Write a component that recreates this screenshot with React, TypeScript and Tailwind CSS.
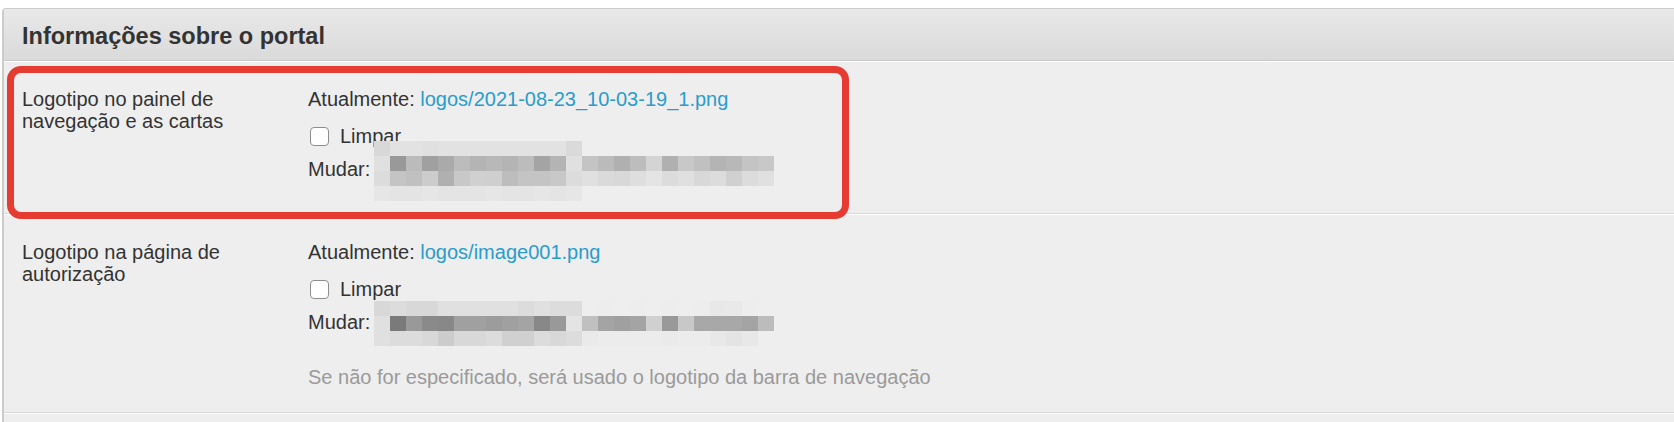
import React from "react";

const M1: string[][] = [
  ["d8", "e2", "e2", "e0", "e2", "e2", "e2", "e2", "e2", "e2", "e2", "e2", "da"],
  ["e0", "99", "bb", "a0", "aa", "bc", "b4", "b8", "b4", "bc", "a4", "b4", "e0", "c4", "bb", "b0", "bd", "d4", "b0", "c8", "c0", "b4", "b8", "c4", "c8"],
  ["dc", "c4", "c0", "cc", "b0", "c8", "d0", "cf", "bd", "c4", "c4", "c8", "dc", "e0", "da", "d8", "de", "e4", "dc", "e0", "d8", "dc", "d0", "dc", "e0"],
  ["e6", "e4", "e4", "e6", "e4", "e4", "e4", "e6", "e4", "e4", "e6", "e4", "e6"],
];

const M2: string[][] = [
  ["d8", "dc", "d8", "d8", "e0", "e0", "e0", "e0", "e0", "dc", "e0", "dc", "dc", "ee", "ed", "ee", "ed", "ee", "ed", "ee", "ed", "e8", "e9", "ed", "ee"],
  ["e0", "7a", "99", "8a", "88", "a0", "a0", "9c", "a0", "a4", "88", "99", "e4", "c0", "a4", "a0", "a4", "d0", "99", "c8", "a8", "a8", "a8", "a4", "bc"],
  ["e0", "dc", "dc", "d8", "cc", "d8", "d8", "dc", "d0", "d0", "dc", "d8", "dc", "ea", "ec", "ec", "ec", "ec", "ea", "ec", "ec", "e8", "e4", "e8", "ee"],
];

function Mosaic({ data }: { data: string[][] }) {
  const cw = 16;
  const ch = 15;
  return (
    <svg width={25 * cw} height={data.length * ch} className="block shrink-0">
      {data.map((row, r) =>
        row.map((c, i) => (
          <rect key={r + "-" + i} x={i * cw} y={r * ch} width={cw} height={ch} fill={"#" + c + c + c} />
        ))
      )}
    </svg>
  );
}

function Checkbox() {
  return <span className="ml-[2px] inline-block h-[19px] w-[19px] rounded-[4px] border border-[#8d8d8d] bg-white" />;
}

function FileField({ file, mosaic, help }: { file: string; mosaic: string[][]; help?: string }) {
  return (
    <div className="flex flex-col">
      <div className="h-[22px] whitespace-nowrap">
        Atualmente: <a className="text-[#2a9ccb]">{file}</a>
      </div>
      <div className="mt-[15px] flex h-[22px] items-center">
        <Checkbox />
        <span className="ml-[11px]">Limpar</span>
      </div>
      <div className="mt-[11px] flex h-[22px] items-center">
        <span>Mudar:</span>
        <div className="ml-[4px] mt-[3px]">
          <Mosaic data={mosaic} />
        </div>
      </div>
      {help && <div className="mt-[33px] h-[22px] whitespace-nowrap text-[#9a9a9a]">{help}</div>}
    </div>
  );
}

export default function App() {
  return (
    <div
      className="relative h-[422px] w-[1674px] overflow-hidden bg-white text-[20px] leading-[22px] text-[#333]"
      style={{ fontFamily: '"Liberation Sans", Arial, Helvetica, sans-serif' }}
    >
      <div className="ml-[2px] mt-[8px] w-[1700px] rounded-tl-[4px] border border-l-2 border-[#cccccc] bg-[#eeeeee]">
        <div className="flex h-[52px] items-center border-b border-[#c9c9c9] bg-gradient-to-b from-[#e9e9e9] to-[#dadada] pl-[18px] pt-[3px] text-[23.5px] font-bold text-[#333]">
          Informações sobre o portal
        </div>
        <div className="flex border-t border-b border-t-white border-b-[#dadada] pb-[33px] pt-[26px]">
          <div className="w-[304px] shrink-0 pl-[18px]">
            <div className="w-[230px]">Logotipo no painel de navegação e as cartas</div>
          </div>
          <FileField file="logos/2021-08-23_10-03-19_1.png" mosaic={M1} />
        </div>
        <div className="flex border-t border-b border-t-white border-b-[#dadada] pb-[24px] pt-[26px]">
          <div className="w-[304px] shrink-0 pl-[18px]">
            <div className="w-[230px]">Logotipo na página de autorização</div>
          </div>
          <FileField
            file="logos/image001.png"
            mosaic={M2}
            help="Se não for especificado, será usado o logotipo da barra de navegação"
          />
        </div>
        <div className="h-[40px] border-t border-t-white"></div>
      </div>
      <div className="pointer-events-none absolute left-[7px] top-[66px] h-[153px] w-[842px] rounded-[14px] border-[7px] border-[#e53b30]" />
    </div>
  );
}
